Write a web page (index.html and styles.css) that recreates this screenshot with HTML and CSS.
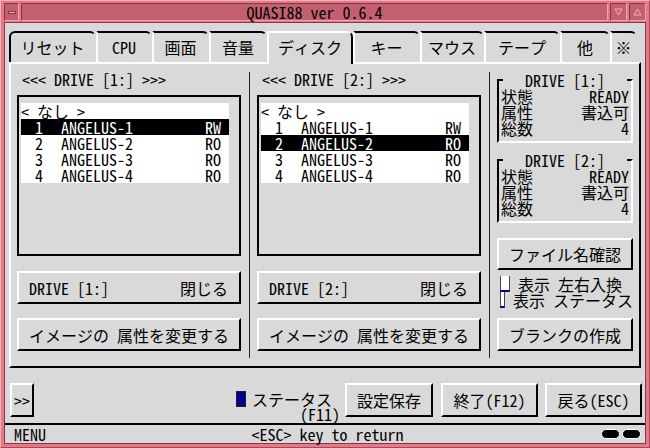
FILE: index.html
```html
<!DOCTYPE html>
<html lang="ja">
<head>
    <meta charset="UTF-8">
    <title>QUASI88 ver 0.6.4</title>
    <link rel="stylesheet" href="styles.css">
</head>
<body>
    <div class="window">
        <div class="titlebar">
            <div class="tb-btn tb-menu"><span class="dash"></span></div>
            <div class="title">QUASI88 ver 0.6.4</div>
            <div class="tb-btn">
                <svg width="9" height="8" viewBox="0 0 9 8"><polygon points="1,1 8,1 4.5,7" fill="none" stroke="#f6b4bc" stroke-width="1"/></svg>
            </div>
            <div class="tb-btn">
                <svg width="9" height="8" viewBox="0 0 9 8"><polygon points="1,7 8,7 4.5,1" fill="none" stroke="#f6b4bc" stroke-width="1"/></svg>
            </div>
        </div>

        <div class="client">
            <div class="tabs">
                <div class="tab">リセット</div>
                <div class="tab">CPU</div>
                <div class="tab">画面</div>
                <div class="tab">音量</div>
                <div class="tab active">ディスク</div>
                <div class="tab">キー</div>
                <div class="tab">マウス</div>
                <div class="tab">テープ</div>
                <div class="tab">他</div>
                <div class="tab">※</div>
            </div>

            <div class="page">
                <div class="drive-col">
                    <div class="drive-label">&lt;&lt;&lt; DRIVE [1:] &gt;&gt;&gt;</div>
                    <div class="list-frame">
                        <div class="list">
                            <div class="row">&lt; なし &gt;</div>
                            <div class="row selected"><span class="num">1</span><span class="name">ANGELUS-1</span><span class="attr">RW</span></div>
                            <div class="row"><span class="num">2</span><span class="name">ANGELUS-2</span><span class="attr">RO</span></div>
                            <div class="row"><span class="num">3</span><span class="name">ANGELUS-3</span><span class="attr">RO</span></div>
                            <div class="row"><span class="num">4</span><span class="name">ANGELUS-4</span><span class="attr">RO</span></div>
                        </div>
                    </div>
                    <div class="btn btn-split"><span>DRIVE [1:]</span><span>閉じる</span></div>
                    <div class="btn">イメージの 属性を変更する</div>
                </div>

                <div class="vsep"></div>

                <div class="drive-col">
                    <div class="drive-label">&lt;&lt;&lt; DRIVE [2:] &gt;&gt;&gt;</div>
                    <div class="list-frame">
                        <div class="list">
                            <div class="row">&lt; なし &gt;</div>
                            <div class="row"><span class="num">1</span><span class="name">ANGELUS-1</span><span class="attr">RW</span></div>
                            <div class="row selected"><span class="num">2</span><span class="name">ANGELUS-2</span><span class="attr">RO</span></div>
                            <div class="row"><span class="num">3</span><span class="name">ANGELUS-3</span><span class="attr">RO</span></div>
                            <div class="row"><span class="num">4</span><span class="name">ANGELUS-4</span><span class="attr">RO</span></div>
                        </div>
                    </div>
                    <div class="btn btn-split"><span>DRIVE [2:]</span><span>閉じる</span></div>
                    <div class="btn">イメージの 属性を変更する</div>
                </div>

                <div class="vsep"></div>

                <div class="side-col">
                    <fieldset class="info">
                        <legend>DRIVE [1:]</legend>
                        <div class="info-row"><span>状態</span><span>READY</span></div>
                        <div class="info-row"><span>属性</span><span>書込可</span></div>
                        <div class="info-row"><span>総数</span><span>4</span></div>
                    </fieldset>
                    <fieldset class="info">
                        <legend>DRIVE [2:]</legend>
                        <div class="info-row"><span>状態</span><span>READY</span></div>
                        <div class="info-row"><span>属性</span><span>書込可</span></div>
                        <div class="info-row"><span>総数</span><span>4</span></div>
                    </fieldset>
                    <div class="btn btn-side">ファイル名確認</div>
                    <div class="checks">
                        <div class="check"><span class="box"></span>表示 左右入換</div>
                        <div class="check"><span class="box"></span>表示 ステータス</div>
                    </div>
                    <div class="btn btn-side btn-blank">ブランクの作成</div>
                </div>
            </div>

            <div class="bottom">
                <div class="btn btn-more">&gt;&gt;</div>
                <div class="status-toggle">
                    <span class="led"></span>
                    <div class="status-text">
                        <div>ステータス</div>
                        <div class="fkey">(F11)</div>
                    </div>
                </div>
                <div class="btn btn-save">設定保存</div>
                <div class="btn btn-quit">終了(F12)</div>
                <div class="btn btn-back">戻る(ESC)</div>
            </div>

            <div class="statusbar">
                <span class="menu">MENU</span>
                <span class="hint">&lt;ESC&gt; key to return</span>
                <span class="pills"><span class="pill"></span><span class="pill"></span></span>
            </div>
        </div>
    </div>
</body>
</html>
```

FILE: styles.css
```css
* {
    box-sizing: border-box;
}

body {
    margin: 0;
    font-family: "Noto Sans Mono CJK JP", "Noto Sans CJK JP", monospace;
    font-size: 16px;
    line-height: 16px;
    color: #000;
    background-color: #e27a87;
}

.window {
    width: 650px;
    height: 448px;
    display: flex;
    flex-direction: column;
    background-color: #e27a87;
    border: 1px solid;
    border-color: #f6b2b9 #a84858 #a84858 #f6b2b9;
    padding: 2px 3px 3px 3px;
}

/* title bar */
.titlebar {
    display: flex;
    gap: 2px;
    height: 18px;
    margin-bottom: 1px;
}

.tb-btn,
.title {
    background-color: #c2606f;
    border: 1px solid;
    border-color: #8a3444 #f0a0aa #f0a0aa #8a3444;
    display: flex;
    align-items: center;
    justify-content: center;
}

.tb-btn {
    width: 17px;
}

.tb-menu {
    width: 15px;
}

.dash {
    width: 8px;
    height: 3px;
    background-color: #f4b0b8;
    border: 1px solid #8a3444;
}

.title {
    flex: 1;
    font-size: 16px;
}

/* client area */
.client {
    flex: 1;
    display: flex;
    flex-direction: column;
    background-color: #d9d9d9;
    border: 1px solid #8a3444;
}

.tabs {
    display: flex;
    padding: 8px 0 0 4px;
    height: 39px;
}

.tab {
    height: 31px;
    padding-top: 6px;
    text-align: center;
    border-top: 2px solid #000;
    border-left: 2px solid #fff;
    border-right: 2px solid transparent;
    border-top-right-radius: 6px;
    background-color: #d9d9d9;
}

.tab:first-child {
    border-left-color: #000;
    border-top-left-radius: 6px;
}

.tab:nth-child(1) { width: 87px; }
.tab:nth-child(2) { width: 56px; }
.tab:nth-child(3) { width: 57px; }
.tab:nth-child(4) { width: 58px; }
.tab:nth-child(5) { width: 86px; }
.tab:nth-child(6) { width: 67px; }
.tab:nth-child(7) { width: 64px; }
.tab:nth-child(8) { width: 76px; }
.tab:nth-child(9) { width: 50px; }
.tab:nth-child(10) { width: 27px; }

.tab.active {
    position: relative;
    z-index: 1;
    height: 33px;
    margin-bottom: -2px;
    border-top-color: #fff;
    border-right-color: #000;
}

.page {
    height: 306px;
    margin: 0 4px;
    display: flex;
    border: 2px solid;
    border-color: #fff #000 #000 #fff;
}

.drive-col {
    width: 238px;
    padding: 7px 8px 0 6px;
}

.drive-col + .vsep + .drive-col {
    width: 239px;
    padding-left: 7px;
}

.vsep {
    width: 1px;
    margin: 8px 0;
    background-color: #222;
}

.drive-label {
    padding-left: 5px;
}

.list-frame {
    height: 161px;
    margin-top: 8px;
    border: 2px solid #000;
    padding: 6px 0 0 2px;
}

.list {
    width: 208px;
    background-color: #fff;
}

.row {
    display: flex;
    height: 16px;
    white-space: pre;
}

.row.selected {
    background-color: #000;
    color: #fff;
}

.num {
    width: 40px;
    padding-left: 14px;
}

.name {
    width: 144px;
}

.btn {
    height: 33px;
    display: flex;
    align-items: center;
    justify-content: center;
    border: 2px solid;
    border-color: #fff #000 #000 #fff;
    background-color: #d9d9d9;
    white-space: pre;
}

.drive-col .btn {
    margin-top: 14px;
}

.drive-col .btn-split {
    margin-top: 15px;
    justify-content: space-between;
    padding: 0 11px 0 10px;
}

/* right column */
.side-col {
    width: 149px;
    padding: 8px 6px 0 7px;
}

.info {
    margin: 0;
    padding: 0 2px 5px 2px;
    border: 2px solid;
    border-color: #000 #fff #fff #000;
}

.info + .info {
    margin-top: 9px;
}

.info legend {
    margin: 0 auto;
    padding: 0 22px;
    line-height: 16px;
}

.info-row {
    display: flex;
    justify-content: space-between;
    height: 16px;
}

.btn-side {
    margin-top: 15px;
    height: 32px;
}

.checks {
    margin-top: 6px;
    padding-left: 3px;
}

.check {
    display: flex;
    height: 16px;
    white-space: nowrap;
}

.check .box {
    width: 10px;
    height: 16px;
    margin-right: 8px;
    background-color: #fff;
    border-left: 1px solid #444;
    border-right: 1px solid #444;
    border-bottom: 2px solid #0000a0;
}

.btn-blank {
    margin-top: 10px;
    height: 33px;
}

/* bottom buttons */
.bottom {
    height: 55px;
    display: flex;
    align-items: flex-start;
    padding: 15px 3px 0 5px;
}

.bottom .btn {
    height: 34px;
}

.btn-more {
    width: 24px;
}

.status-toggle {
    margin-left: auto;
    margin-top: 8px;
    display: flex;
}

.led {
    width: 10px;
    height: 16px;
    margin-right: 6px;
    background-color: #000090;
    border: 1px solid #222;
}

.status-text {
    width: 88px;
}

.fkey {
    text-align: right;
    line-height: 15px;
}

.btn-save {
    width: 88px;
    margin-left: 5px;
}

.btn-quit {
    width: 97px;
    margin-left: 8px;
}

.btn-back {
    width: 97px;
    margin-left: 7px;
}

/* status bar */
.statusbar {
    height: 20px;
    border-top: 2px solid #000;
    display: grid;
    grid-template-columns: 1fr auto 1fr;
    align-items: center;
    padding: 0 4px 0 9px;
}

.pills {
    justify-self: end;
    display: flex;
    gap: 2px;
}

.pill {
    width: 19px;
    height: 10px;
    background-color: #000;
    border: 1px solid #fff;
    border-radius: 5px;
}
```
